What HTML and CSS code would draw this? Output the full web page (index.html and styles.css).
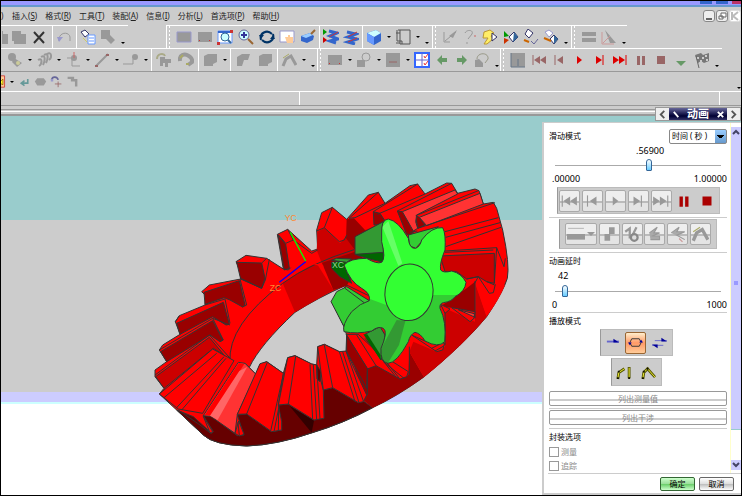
FILE: index.html
```
<!DOCTYPE html>
<html lang="zh-CN">
<head>
    <meta charset="UTF-8">
    <meta name="viewport" content="width=device-width, initial-scale=1.0">
    <link rel="stylesheet" href="styles.css">
    <title>动画</title>
</head>
<body>
    <!-- icons -->
    <svg class="sprite" aria-hidden="true">
        <symbol id="paste" viewBox="0 0 16 16"><path d="M1 2h9v3h5v10H3v-3H1z" fill="#999"/></symbol>
        <symbol id="cut" viewBox="0 0 16 16"><path d="M3 3l10 11M13 3L3 14" stroke="#333" stroke-width="2"/></symbol>
        <symbol id="undo" viewBox="0 0 16 16"><path d="M3 12C2 3 13 2 14 8v4" fill="none" stroke="#999"/><path d="M1 8l6 0-4 5z" fill="#99c"/></symbol>
        <symbol id="props" viewBox="0 0 16 16"><path d="M1 3l4-2 4 4-4 3z" fill="#fff" stroke="#336"/><path d="M8 6h7v9H8z" fill="#fff" stroke="#69f"/><path d="M9 9h5M9 12h5" stroke="#69f"/><path d="M3 9l4 4" stroke="#cc6"/></symbol>
        <symbol id="blocks" viewBox="0 0 16 16"><path d="M1 1h9v5l5 5-4 4-5-5H1z" fill="#999"/></symbol>
        <symbol id="square" viewBox="0 0 16 16"><path d="M1 3h14v10H1z" fill="#999" stroke="#99c"/></symbol>
        <symbol id="square2" viewBox="0 0 16 16"><path d="M1 3h14v10H1z" fill="#999"/><path d="M2 11h1v1H2zM12 11h1v1h-1z" fill="#c33"/></symbol>
        <symbol id="fit" viewBox="0 0 16 16"><path d="M1 2h14v12H1z" fill="#fff" stroke="#69f"/><path d="M1 3h14" stroke="#36c" stroke-width="2"/><circle cx="8" cy="8" r="4" fill="#cff" stroke="#369"/><path d="M11 11l3 3" stroke="#369" stroke-width="2"/><path d="M0 13h3v3H0zM13 1h3v3h-3z" fill="#c33"/></symbol>
        <symbol id="zoom" viewBox="0 0 16 16"><circle cx="6" cy="6" r="5" fill="#cff" stroke="#669"/><path d="M3 6h6M6 3v6" stroke="#339" stroke-width="2"/><path d="M10 10l5 5" stroke="#963" stroke-width="2"/></symbol>
        <symbol id="rotate" viewBox="0 0 16 16"><path d="M2 11C0 4 8 0 13 5M14 5C16 12 8 16 3 11" fill="none" stroke="#036" stroke-width="2"/><path d="M0 6l5 0-3 4zM11 10l5 0-2-4z" fill="#036"/></symbol>
        <symbol id="hand" viewBox="0 0 16 16"><path d="M1 2h14v11H1z" fill="#fff" stroke="#99c"/><path d="M6 8h3V6h2v2h3v6H8z" fill="#fc9"/></symbol>
        <symbol id="cylinder" viewBox="0 0 16 16"><path d="M1 7l9-3 4 3-1 4-6 3-6-2z" fill="#36c"/><path d="M1 7l9-3 3 2-7 3z" fill="#9cf"/><path d="M11 5l4-4" stroke="#963" stroke-width="2"/></symbol>
        <symbol id="spring" viewBox="0 0 16 16"><path d="M4 3l9 2-8 3 9 2-9 3 7 2" fill="none" stroke="#36c" stroke-width="3"/><path d="M5 8l9-5M5 13l9-4" stroke="#c33"/></symbol>
        <symbol id="spring2" viewBox="0 0 16 16"><path d="M6 2l8 2-7 3 8 3-8 2 6 2" fill="none" stroke="#36c" stroke-width="3"/><path d="M6 8l9-5" stroke="#c33"/><path d="M0 0l4 3-4 3z" fill="#090"/><path d="M0 8l4 3-4 3z" fill="#c00"/></symbol>
        <symbol id="cube" viewBox="0 0 16 16"><path d="M1 4l9-3 5 3v8l-7 4-7-4z" fill="#36c"/><path d="M1 4l9-3 5 3-7 4z" fill="#cff"/><path d="M1 4l7 4v8l-7-4z" fill="#69f"/></symbol>
        <symbol id="sheet" viewBox="0 0 16 16"><path d="M3 1h12v14H5V1M1 4h4M1 14h4M2 1v11h5v3" fill="none" stroke="#555"/></symbol>
        <symbol id="sketch" viewBox="0 0 16 16"><path d="M2 3v10h6M3 12l11-9" fill="none" stroke="#999"/><path d="M7 7l8-6-4 8z" fill="#999"/></symbol>
        <symbol id="query" viewBox="0 0 16 16"><path d="M3 4c2-4 9-3 7 1l-4 5M5 13v2" fill="none" stroke="#999"/><path d="M12 7h2" stroke="#c66"/></symbol>
        <symbol id="palette" viewBox="0 0 16 16"><path d="M2 3l6-2 4 3-3 3 2 3-6 5H2l4-6H1z" fill="#fe6" stroke="#b93"/><path d="M10 4l5 4-5 4z" fill="#fff" stroke="#336"/></symbol>
        <symbol id="compare" viewBox="0 0 16 16"><path d="M1 2l5 5-5 1z" fill="#090"/><path d="M1 9l5 2-5 4z" fill="#c30"/><path d="M11 3l4 5-5 5-4-5z" fill="#fff" stroke="#336"/><path d="M11 3l4 5-5 5z" fill="#369"/></symbol>
        <symbol id="measure" viewBox="0 0 16 16"><path d="M5 0l5 4-4 5-4-4z" fill="#fff" stroke="#336"/><path d="M1 11l5 2" stroke="#c60" stroke-width="2"/><path d="M8 12l3 3 4-5" fill="none" stroke="#669"/></symbol>
        <symbol id="trace" viewBox="0 0 16 16"><path d="M2 3l4-2 4 3-4 4z" fill="#fff" stroke="#99c"/><path d="M11 6l4 4-4 5-4-5z" fill="#fff" stroke="#336"/><path d="M11 6l4 4-4 5z" fill="#369"/><path d="M1 9l7 3" stroke="#c60" stroke-width="2"/></symbol>
        <symbol id="lines" viewBox="0 0 16 16"><path d="M1 5h14M1 11h14" stroke="#999" stroke-width="4"/></symbol>
        <symbol id="ruler" viewBox="0 0 16 16"><path d="M4 1l11 13H9z" fill="#999"/><path d="M1 3v12h12M2 14L9 7" fill="none" stroke="#c99"/></symbol>
        <symbol id="parts" viewBox="0 0 16 16"><circle cx="5" cy="5" r="4" fill="#999"/><path d="M7 6l8 5-5 4-5-5z" fill="#999"/><circle cx="11" cy="11" r="2" fill="#cc9"/></symbol>
        <symbol id="coil" viewBox="0 0 16 16"><path d="M2 8c5-3 4 4 1 6M5 5c5-3 4 4 2 8M8 3c5-3 4 4 2 8M11 2c5-3 5 4 2 6" fill="none" stroke="#999" stroke-width="2"/></symbol>
        <symbol id="joint" viewBox="0 0 16 16"><path d="M2 6h5v8h8" fill="none" stroke="#999"/><circle cx="9" cy="6" r="3" fill="#999"/><path d="M9 0v6" stroke="#c66"/></symbol>
        <symbol id="link" viewBox="0 0 16 16"><path d="M2 14L14 2" stroke="#999" stroke-width="2"/><path d="M1 13h3v2H1zM12 2h3v2h-3z" fill="#966"/></symbol>
        <symbol id="pin" viewBox="0 0 16 16"><path d="M0 12h10V7" fill="none" stroke="#999"/><circle cx="12" cy="5" r="3" fill="#999"/></symbol>
        <symbol id="arch" viewBox="0 0 16 16"><path d="M1 7C1 1 8 1 9 4" fill="none" stroke="#aa8" stroke-width="2"/><path d="M4 5h5v2h6v4h-3v4h-3v-4H7v3H4z" fill="#999"/></symbol>
        <symbol id="ring" viewBox="0 0 16 16"><path d="M2 9C1 2 7 2 9 3s6 3 5 7l-4 3" fill="none" stroke="#999" stroke-width="4"/><path d="M2 6l3-3M8 12h3" stroke="#aa6" stroke-width="2"/></symbol>
        <symbol id="box" viewBox="0 0 16 16"><path d="M2 4l4-2h9v8l-4 2v2H2z" fill="#999"/></symbol>
        <symbol id="bend" viewBox="0 0 16 16"><path d="M2 5l5-3h8l-2 6H9l-2 6H2z" fill="#999"/></symbol>
        <symbol id="robot" viewBox="0 0 16 16"><path d="M2 14l3-7 5-3 5 9" fill="none" stroke="#999" stroke-width="3"/><path d="M2 6l6-4" stroke="#aa6"/></symbol>
        <symbol id="probe" viewBox="0 0 16 16"><circle cx="10" cy="5" r="4" fill="#ccc" stroke="#999"/><path d="M1 8h8v7H1z" fill="#999"/></symbol>
        <symbol id="graph" viewBox="0 0 16 16"><path d="M1 1h14v14H1z" fill="#999"/><path d="M4 10h8" stroke="#966"/></symbol>
        <symbol id="check" viewBox="0 0 16 16"><path d="M1 1h14v14H1z" fill="#fff" stroke="#36f" stroke-width="2"/><path d="M8 1v14M1 8h14" stroke="#66c"/><path d="M10 4l1 2 3-4M10 11l1 2 3-4" fill="none" stroke="#e33"/></symbol>
        <symbol id="left" viewBox="0 0 16 16"><path d="M3 8l5-5v3h5v4H8v3z" fill="#696"/></symbol>
        <symbol id="right" viewBox="0 0 16 16"><path d="M13 8L8 3v3H3v4h5v3z" fill="#696"/></symbol>
        <symbol id="spin" viewBox="0 0 16 16"><path d="M3 7c0-7 12-7 11 0l-3 4" fill="none" stroke="#998"/><path d="M1 8l4-1 4 4v4H1z" fill="#999"/></symbol>
        <symbol id="panel" viewBox="0 0 16 16"><path d="M1 1h14v14H1z" fill="#999"/><path d="M1 1v14h14M8 7v7" fill="none" stroke="#678"/></symbol>
        <symbol id="first" viewBox="0 0 16 16"><path d="M2 3v10" stroke="currentColor"/><path d="M9 4v8L3 8zM15 4v8L9 8z" fill="currentColor"/></symbol>
        <symbol id="prev" viewBox="0 0 16 16"><path d="M4 3v10" stroke="currentColor"/><path d="M12 4v8L6 8z" fill="currentColor"/></symbol>
        <symbol id="play" viewBox="0 0 16 16"><path d="M6 4v8l5-4z" fill="currentColor"/></symbol>
        <symbol id="next" viewBox="0 0 16 16"><path d="M4 4v8l6-4z" fill="currentColor"/><path d="M11 3v10" stroke="currentColor"/></symbol>
        <symbol id="last" viewBox="0 0 16 16"><path d="M1 4v8l6-4zM7 4v8l6-4z" fill="currentColor"/><path d="M14 3v10" stroke="currentColor"/></symbol>
        <symbol id="pause" viewBox="0 0 16 16"><path d="M4 4h3v9H4zM9 4h3v9H9z" fill="currentColor"/></symbol>
        <symbol id="stop" viewBox="0 0 16 16"><path d="M4 4h8v8H4z" fill="currentColor"/></symbol>
        <symbol id="down" viewBox="0 0 16 16"><path d="M3 9h10l-5 5z" fill="#696"/></symbol>
        <symbol id="flag" viewBox="0 0 16 16"><path d="M1 3l6-2 2 2 6-2v8l-5 2-3-2-3 2z" fill="#777"/><path d="M3 5h2v2H3zM8 5h2v2H8zM11 3h2v2h-2zM6 8h2v2H6zM12 7h2v2h-2z" fill="#ccc"/><path d="M2 4l3 12" stroke="#666"/></symbol>
        <symbol id="sun" viewBox="0 0 16 16"><path d="M0 1h13v14H0z" fill="#fc9" stroke="#c33"/><path d="M2 8l4-4 3 3 2-2v7l-4-2-3 3z" fill="#ff3" stroke="#960"/></symbol>
        <symbol id="back" viewBox="0 0 16 16"><path d="M5 10h7V5M8 7l-4 3 4 3" fill="none" stroke="#699" stroke-width="2"/></symbol>
        <symbol id="blob" viewBox="0 0 16 16"><path d="M4 4h8l3 4-3 5H4L1 8z" fill="#999"/></symbol>
        <symbol id="arc" viewBox="0 0 16 16"><path d="M2 6c1-5 7-4 8 0" fill="none" stroke="#669" stroke-width="2"/><path d="M10 8v7M6 11h8" stroke="#966"/><path d="M1 5h3v3H1z" fill="#99c"/></symbol>
        <symbol id="corner" viewBox="0 0 16 16"><path d="M2 2h8v3h4v9h-3V8H6V5H2z" fill="#999"/></symbol>
        <symbol id="once" viewBox="0 0 16 16"><path d="M2 7h13" stroke="#66c" stroke-width="2"/><path d="M9 4l6 4H9z" fill="#009"/></symbol>
        <symbol id="loop" viewBox="0 0 16 16"><path d="M4 4h8l2 4-2 4H4L2 8z" fill="none" stroke="#333"/><path d="M0 8h4l-2 3zM12 8h4l-2-3z" fill="#009"/></symbol>
        <symbol id="swap" viewBox="0 0 16 16"><path d="M3 6h13M0 11h12" stroke="#66c"/><path d="M10 3l6 4h-6zM6 14l-6-4h6z" fill="#009"/></symbol>
        <symbol id="arm1" viewBox="0 0 16 16"><path d="M2 15l1-7 6-4M14 2v12" fill="none" stroke="#550" stroke-width="3"/><path d="M2 14l1-6 6-4M14 3v10" fill="none" stroke="#ee3"/><path d="M1 13h2v2H1zM13 13h2v2h-2zM2 6h2v2H2z" fill="#110"/></symbol>
        <symbol id="arm2" viewBox="0 0 16 16"><path d="M2 15l1-7 4-4 8 9" fill="none" stroke="#550" stroke-width="3"/><path d="M2 14l1-6 4-4 8 9" fill="none" stroke="#ee3"/><path d="M1 13h2v2H1zM2 6h2v2H2zM6 3h2v2H6z" fill="#110"/></symbol>
        <symbol id="steps" viewBox="0 0 16 16"><path d="M8 2h5v6H9v6H4V8h4z" fill="#999"/></symbol>
        <symbol id="wheel" viewBox="0 0 16 16"><path d="M2 6l4-3v9M8 10l4-8" fill="none" stroke="#999" stroke-width="2"/><circle cx="10" cy="11" r="3" fill="#ddd" stroke="#888" stroke-width="2"/></symbol>
        <symbol id="clamp" viewBox="0 0 16 16"><path d="M3 7l7-5-3 5h5l-7 3h7v3H4" fill="#aaa" stroke="#999"/></symbol>
        <symbol id="clamp2" viewBox="0 0 16 16"><path d="M2 7l7-5-2 4h7l-7 3 7 4" fill="#aaa" stroke="#999"/><path d="M9 12l3 3" stroke="#c99"/></symbol>
        <symbol id="ruler2" viewBox="0 0 16 16"><path d="M1 3h14" stroke="#bbb"/><path d="M0 8h16v5H0z" fill="#999"/></symbol>
    </svg>

    <div class="title-strip"><i></i><i></i><i class="red"></i></div>

    <nav class="menu">
        <a href="#" class="cut-off">)</a>
        <a href="#">插入(<u>S</u>)</a>
        <a href="#">格式(<u>R</u>)</a>
        <a href="#">工具(<u>T</u>)</a>
        <a href="#">装配(<u>A</u>)</a>
        <a href="#">信息(<u>I</u>)</a>
        <a href="#">分析(<u>L</u>)</a>
        <a href="#">首选项(<u>P</u>)</a>
        <a href="#">帮助(<u>H</u>)</a>
        <div class="mdi">
            <button aria-label="最小化"><svg viewBox="0 0 10 10"><path d="M2 8h6" stroke="#666" stroke-width="2"/></svg></button>
            <button aria-label="还原"><svg viewBox="0 0 10 10"><path d="M4 2h5v4H4zM2 5h4v3H2z" fill="#fff" stroke="#666"/></svg></button>
            <button aria-label="关闭" disabled><svg viewBox="0 0 10 10"><path d="M2 1v8M8 1L3 5l5 4" fill="none" stroke="#bbb" stroke-width="2"/></svg></button>
        </div>
    </nav>

    <div class="toolrow">
        <div class="bar bar-edit">
            <div class="group">
                <button class="tool half"><svg><use href="#paste"/></svg></button>
                <button class="tool"><svg><use href="#paste"/></svg></button>
                <button class="tool"><svg><use href="#cut"/></svg></button>
            </div>
            <div class="group"><button class="tool"><svg><use href="#undo"/></svg></button></div>
            <div class="group">
                <button class="tool"><svg><use href="#props"/></svg></button>
                <button class="tool"><svg><use href="#blocks"/></svg></button>
                <button class="caret low"></button>
            </div>
        </div>
        <div class="bar grip bar-view">
            <div class="group grow">
                <button class="tool"><svg><use href="#square"/></svg></button>
                <button class="tool"><svg><use href="#square2"/></svg></button>
                <button class="tool"><svg><use href="#fit"/></svg></button>
                <button class="tool"><svg><use href="#zoom"/></svg></button>
                <button class="tool"><svg><use href="#rotate"/></svg></button>
                <button class="tool"><svg><use href="#hand"/></svg></button>
                <button class="tool"><svg><use href="#cylinder"/></svg></button>
            </div>
            <div class="group">
                <button class="tool"><svg><use href="#spring2"/></svg></button>
                <button class="tool"><svg><use href="#spring"/></svg></button>
            </div>
            <div class="group">
                <button class="tool"><svg><use href="#cube"/></svg></button><button class="caret"></button>
                <button class="tool"><svg><use href="#sheet"/></svg></button><button class="caret"></button>
                <button class="caret low"></button>
            </div>
        </div>
        <div class="bar grip bar-check">
            <div class="group grow">
                <button class="tool"><svg><use href="#sketch"/></svg></button>
                <button class="tool"><svg><use href="#query"/></svg></button>
                <button class="tool"><svg><use href="#palette"/></svg></button>
                <button class="tool"><svg><use href="#compare"/></svg></button>
                <button class="tool"><svg><use href="#measure"/></svg></button>
                <button class="tool"><svg><use href="#trace"/></svg></button>
                <button class="caret low"></button>
            </div>
        </div>
        <div class="bar grip bar-ruler">
            <div class="group grow">
                <button class="tool"><svg><use href="#lines"/></svg></button>
                <button class="tool"><svg><use href="#ruler"/></svg></button>
                <button class="caret low"></button>
            </div>
        </div>
    </div>

    <div class="toolrow">
        <div class="bar bar-motion">
            <div class="group first">
                <button class="tool"><svg><use href="#parts"/></svg></button><button class="caret"></button>
                <button class="tool"><svg><use href="#coil"/></svg></button><button class="caret"></button>
                <button class="tool"><svg><use href="#joint"/></svg></button><button class="caret"></button>
                <button class="tool"><svg><use href="#link"/></svg></button><button class="caret"></button>
                <button class="tool"><svg><use href="#pin"/></svg></button><button class="caret"></button>
            </div>
            <div class="group pair">
                <button class="tool"><svg><use href="#arch"/></svg></button>
                <button class="tool"><svg><use href="#ring"/></svg></button>
            </div>
            <div class="group"><button class="tool"><svg><use href="#box"/></svg></button><button class="caret"></button></div>
            <div class="group pair">
                <button class="tool"><svg><use href="#bend"/></svg></button>
                <button class="tool"><svg><use href="#box"/></svg></button>
            </div>
            <div class="group"><button class="tool"><svg><use href="#robot"/></svg></button><button class="caret"></button><button class="caret low"></button></div>
        </div>
        <div class="bar grip bar-solve">
            <div class="group grow">
                <button class="tool"><svg><use href="#square2"/></svg></button><button class="caret"></button>
                <button class="tool"><svg><use href="#probe"/></svg></button><button class="caret"></button>
                <button class="tool"><svg><use href="#graph"/></svg></button><button class="caret"></button>
                <button class="tool"><svg><use href="#check"/></svg></button>
                <button class="tool"><svg><use href="#left"/></svg></button>
                <button class="tool"><svg><use href="#right"/></svg></button>
                <button class="tool"><svg><use href="#spin"/></svg></button>
                <button class="caret low"></button>
            </div>
        </div>
        <div class="bar grip bar-anim">
            <div class="group grow">
                <button class="tool"><svg><use href="#panel"/></svg></button>
                <button class="tool dull"><svg><use href="#first"/></svg></button>
                <button class="tool dull"><svg><use href="#prev"/></svg></button>
                <button class="tool live"><svg><use href="#play"/></svg></button>
                <button class="tool live"><svg><use href="#next"/></svg></button>
                <button class="tool live"><svg><use href="#last"/></svg></button>
                <button class="tool dull"><svg><use href="#pause"/></svg></button>
                <button class="tool dull"><svg><use href="#stop"/></svg></button>
                <button class="tool"><svg><use href="#down"/></svg></button>
                <button class="tool"><svg><use href="#flag"/></svg></button>
                <button class="caret low"></button>
            </div>
        </div>
    </div>

    <div class="toolrow small">
        <button class="tool half"><svg><use href="#sun"/></svg></button><button class="caret"></button>
        <button class="tool"><svg><use href="#back"/></svg></button>
        <button class="tool"><svg><use href="#blob"/></svg></button>
        <button class="tool"><svg><use href="#arc"/></svg></button>
        <button class="tool"><svg><use href="#corner"/></svg></button>
        <button class="caret low end"></button>
    </div>
    <div class="prompt"><div></div><div></div><div></div></div>
    <div class="edge"></div>

    <main class="work">
        <!-- bevel gear and pinion, drawn at three units to the pixel -->
        <svg class="model" viewBox="0 0 1110 825" role="img" aria-label="锥齿轮">
            <defs>
                <clipPath id="pinion-face">
                    <path d="M695 180Q692 133 715 132Q745 138 775 190Q778 222 797 220Q810 215 815 195Q845 155 878 158Q888 175 885 225Q868 265 872 285Q880 295 905 288Q935 295 948 322Q945 350 915 365Q905 380 880 383Q868 385 870 400Q890 440 884 500Q865 520 825 498Q812 475 795 472Q780 478 775 500Q740 565 713 565Q690 560 693 520Q715 470 700 460Q685 452 665 468Q620 478 582 470Q575 450 605 410Q630 385 658 377Q662 355 635 340Q600 320 582 270Q600 250 650 250Q680 268 695 262Q708 250 695 200z"/>
                </clipPath>
            </defs>
            <g class="ink">
                <path fill="#f00" fill-rule="evenodd" d="M28 657L42 640 15 605 15 585 50 560 28 525 38 510 90 478 76 440 88 422 165 390 168 363 155 350 178 330 272 312 270 285 258 260 288 241 350 250 400 282 382 178 413 163 485 228 503 222 500 165 515 113 547 97 590 133 655 60 685 52 705 85 780 32 803 27 825 57 890 24 905 25 923 55 975 42 987 47 1000 87 1030 82 1040 100 1058 165Q1080 270 1072 310Q1060 350 1010 425Q940 510 820 607Q740 665 668 698Q580 745 487 773Q380 810 290 813Q190 810 160 780L80 705z
                M298 577Q330 510 435 412Q500 370 590 330L545 380 582 455 590 480 588 530 568 530 523 508 503 515 500 570 485 567 435 542 413 548 400 595 350 560 330 568 318 598 285 565z"/>
                <!-- inner cone -->
                <g stroke="none">
                    <path fill="#c00" d="M398 325Q450 285 500 265L550 345 435 412z"/>
                    <path fill="#900" d="M515 262L615 228 640 250 590 332 550 345z"/>
                    <path fill="#c00" d="M500 225L503 170 523 158 570 205 590 182 600 140 615 230 515 264z"/>
                    <path fill="#900" d="M590 133L612 130 645 165 660 170 615 190 615 225 588 190z"/>
                    <path fill="#c00" d="M645 165L690 147 705 138 690 150 660 172z"/>
                </g>
                <path fill="none" d="M240 562Q232 450 398 325Q480 265 612 224"/>
                <!-- back teeth -->
                <path fill="#900" d="M80 445L220 382 238 448 228 450 188 425 90 478z"/>
                <path fill="#900" d="M162 352L268 317 285 390 278 396 240 375 222 368 165 388z"/>
                <path fill="#900" d="M260 262L335 264 345 310 335 340 272 312z"/>
                <path fill="#900" d="M384 180L407 208 418 280 403 285z"/>
                <path fill="#900" d="M32 530L188 437 218 495 210 500 180 480 50 560z"/>
                <path fill="#c00" d="M17 605L178 487 222 540 190 520 42 640z"/>
                <path fill="none" d="M76 440L88 422M165 390L225 372 240 445M270 312L290 390 278 396M272 310L335 340 346 315 358 253M335 264L350 250M400 282L415 285 422 278M384 178L407 205 430 195 413 163M430 195L485 235 503 225M500 168L523 158 547 97M523 158L568 200 583 195 590 180M28 525L188 430 240 450M188 430L220 495 210 500M178 480L245 555M15 600L178 480"/>
                <!-- rim shading -->
                <path fill="#600" d="M80 705L130 725 185 775 190 770 160 722 182 722 262 782 282 780 262 720 290 717 365 770 395 765 385 690 415 687 492 735 520 728 520 645 548 638 625 683 640 678 668 698Q580 745 487 773Q380 810 290 813Q190 810 160 780z"/>
                <g stroke="none">
                    <path fill="#300" d="M418 692L492 737 485 773z"/>
                    <path fill="#900" d="M588 478L652 580 678 572 752 612 775 600 778 530 822 607Q740 665 668 698L640 675z"/>
                    <path fill="#c00" d="M778 530L790 500 860 530 885 515 885 400 975 440 977 330 1010 425Q940 510 822 607z"/>
                    <path fill="#f00" d="M977 325L985 305 1020 352 1065 330Q1050 370 1010 425z"/>
                    <path fill="#900" d="M870 395L950 340 975 320 975 410 905 398z"/>
                </g>
                <path fill="none" d="M652 580V660M778 515V600M885 400V510M975 318V430"/>
                <!-- front teeth -->
                <path d="M28 657L188 522 252 557 158 715 85 702z"/>
                <path fill="none" d="M42 668L200 535M78 700L222 545M95 705L228 550M85 705L150 750 182 775"/>
                <path fill="#f33" d="M160 722L265 562 285 565 318 598 262 718 255 775 182 724z"/>
                <path stroke="none" d="M164 720L266 564 283 567 182 722z"/>
                <path fill="#f66" stroke="none" d="M180 722L268 588 292 575 203 735z"/>
                <path d="M255 775L266 738 282 778 268 783zM160 724L188 770 180 774z"/>
                <path d="M262 718L330 566 350 560 400 595 385 690 395 740 395 765 365 770 290 717z"/>
                <path fill="none" d="M290 717L352 562M362 768L400 598M372 770L388 690M385 768L386 700M268 782l-4-40"/>
                <path d="M385 690L413 548 435 542 485 567 500 570 520 645 522 730 492 735 415 687z"/>
                <path fill="#600" d="M500 570L513 590 510 620 501 612z"/>
                <path fill="none" d="M415 687L437 544M480 568L488 733M490 570L500 735M500 570L510 733"/>
                <path d="M503 515L523 508 568 530 588 528 650 660 640 680 625 683 548 638 520 645z"/>
                <path fill="none" d="M548 638L523 510M568 530L615 680M578 530L627 683M588 528L640 678"/>
                <path d="M588 478L625 478 680 530 775 590 770 605 750 612 678 572 652 582z"/>
                <path fill="#900" d="M590 480L652 580 650 640 590 530z"/>
                <path fill="none" d="M620 480L678 572M645 490L735 602M660 500L748 610M700 560L762 610"/>
                <path d="M785 480L825 498 884 505 878 525 860 530z"/>
                <path fill="none" d="M845 520l35-18M855 528l28-16"/>
                <!-- right hand teeth -->
                <path fill="#900" d="M670 110L690 115 705 138 690 148 672 150zM742 108L757 110 795 165 785 178 770 178zM797 122L808 127 825 150 803 160z"/>
                <path fill="#f33" d="M757 110L915 45 923 57 800 120 797 140 803 160 790 168z"/>
                <path fill="#f33" d="M808 127L990 55 1000 87 830 152z"/>
                <path fill="none" d="M597 130L615 128 705 85M597 130L685 52M670 110L803 27M682 118L825 57M742 108L905 25M797 122L985 47M803 160L1035 83M885 170L1045 128M887 187L1050 143M887 215L1053 157M885 228L1040 218 1062 275 1066 250M780 172l22-4"/>
                <path fill="#c00" d="M870 243L1033 235 1033 325 1010 320 985 305 950 312 920 290 885 290z"/>
                <path fill="none" d="M885 232L1030 225M1040 218L1033 325M985 305L1018 355 1030 353 1036 328M1010 320l24 10M950 312L985 305 974 325"/>
                <path d="M872 388L900 402 885 415zM905 398L960 440 972 430 975 410z"/>
                <path fill="#f33" d="M925 404L973 416V426z"/>
            </g>
            <g class="ink">
                <path fill="#393" d="M615 185L700 140 700 245 615 238z"/>
                <path fill="#060" d="M615 238L700 232 700 262 650 250z"/>
                <path fill="#060" d="M545 262L600 255 585 275 605 325 570 305 545 280z"/>
                <path fill="#393" d="M545 256L560 250 605 252 590 262z"/>
                <path fill="#3c3" d="M775 180L865 155 815 200 797 220 778 212z"/>
                <path fill="#3c3" d="M543 380L560 350 590 335 658 377 630 395 582 455z"/>
                <path fill="none" d="M585 340L645 385M590 330L656 362"/>
                <path fill="#393" d="M645 478L690 455 705 480 693 555z"/>
                <path fill="#060" stroke="none" d="M640 478L652 478 692 540V556z"/>
            </g>
            <g clip-path="url(#pinion-face)">
                <path fill="#3f3" d="M560 120h400v460H560z"/>
                <path fill="#3c3" d="M560 490L600 410 660 372 735 400 760 437 850 360H960V600H560z"/>
                <path fill="#393" d="M740 435L766 438 747 510 710 570 690 560 694 520z"/>
                <path fill="#6f6" d="M697 155L715 138 757 265 745 272z"/>
            </g>
            <g class="ink">
                <path d="M695 180Q692 133 715 132Q745 138 775 190Q778 222 797 220Q810 215 815 195Q845 155 878 158Q888 175 885 225Q868 265 872 285Q880 295 905 288Q935 295 948 322Q945 350 915 365Q905 380 880 383Q868 385 870 400Q890 440 884 500Q865 520 825 498Q812 475 795 472Q780 478 775 500Q740 565 713 565Q690 560 693 520Q715 470 700 460Q685 452 665 468Q620 478 582 470Q575 450 605 410Q630 385 658 377Q662 355 635 340Q600 320 582 270Q600 250 650 250Q680 268 695 262Q708 250 695 200z" fill="none"/>
                <ellipse cx="777" cy="352" rx="72" ry="85" transform="rotate(8 777 352)" fill="#3f3"/>
            </g>
            <g stroke-width="4">
                <path d="M421 172L467 258" stroke="#0f0"/>
                <path d="M467 260L388 322" stroke="#00f"/>
                <path d="M470 260L520 274" stroke="#f00"/>
            </g>
            <g class="axis">
                <text x="404" y="137">YC</text>
                <text x="359" y="348">ZC</text>
                <text x="546" y="280" class="x">XC</text>
            </g>
        </svg>

        <form class="float">
            <header class="caption">
                <button type="button" class="end" aria-label="上一个"><svg viewBox="0 0 10 10"><path d="M7 1L3 5l4 4" fill="none" stroke="#555" stroke-width="2"/></svg></button>
                <button type="button" aria-label="固定"><svg viewBox="0 0 10 10"><path d="M2 2l5 6" stroke="#fff" stroke-width="2"/></svg></button>
                <h1>动画</h1>
                <button type="button" aria-label="关闭"><svg viewBox="0 0 10 10"><path d="M2 2l6 6M8 2L2 8" stroke="#fff" stroke-width="2"/></svg></button>
                <button type="button" class="end" aria-label="下一个"><svg viewBox="0 0 10 10"><path d="M3 1l4 4-4 4" fill="none" stroke="#555" stroke-width="2"/></svg></button>
            </header>
            <div class="dialog">
                <div class="scrolled">
                    <div class="content">
                        <div class="row">
                            <label for="mode">滑动模式</label>
                            <select id="mode"><option>时间 ( 秒 )</option></select>
                        </div>
                        <output class="value time">.56900</output>
                        <input type="range" min="0" max="1" step="0.001" value="0.569" aria-label="时间">
                        <div class="limits"><span>.00000</span><span>1.00000</span></div>
                        <div class="panel playback">
                            <button type="button" class="key" aria-label="第一步" disabled><svg><use href="#first"/></svg></button>
                            <button type="button" class="key" aria-label="上一步" disabled><svg><use href="#prev"/></svg></button>
                            <button type="button" class="key" aria-label="播放" disabled><svg><use href="#play"/></svg></button>
                            <button type="button" class="key" aria-label="下一步" disabled><svg><use href="#next"/></svg></button>
                            <button type="button" class="key" aria-label="最后一步" disabled><svg><use href="#last"/></svg></button>
                            <button type="button" class="key on" aria-label="暂停"><svg><use href="#pause"/></svg></button>
                            <button type="button" class="key on" aria-label="停止"><svg><use href="#stop"/></svg></button>
                        </div>
                        <hr>
                        <div class="panel extras">
                            <button type="button" class="key wide" aria-label="封装" disabled><svg><use href="#ruler2"/></svg><i></i></button>
                            <button type="button" class="key" aria-label="步进" disabled><svg><use href="#steps"/></svg></button>
                            <button type="button" class="key" aria-label="齿轮" disabled><svg><use href="#wheel"/></svg></button>
                            <button type="button" class="key" aria-label="夹紧" disabled><svg><use href="#clamp"/></svg></button>
                            <button type="button" class="key" aria-label="松开" disabled><svg><use href="#clamp2"/></svg></button>
                            <button type="button" class="key" aria-label="机构" disabled><svg><use href="#robot"/></svg></button>
                        </div>
                        <hr>
                        <label class="heading" for="delay">动画延时</label>
                        <output class="value delay">42</output>
                        <input type="range" id="delay" min="0" max="1000" value="42">
                        <div class="limits"><span>0</span><span>1000</span></div>
                        <hr>
                        <div class="heading">播放模式</div>
                        <div class="panel modes">
                            <button type="button" class="key flat" aria-label="播放一次"><svg><use href="#once"/></svg></button>
                            <button type="button" class="key flat chosen" aria-label="循环播放"><svg><use href="#loop"/></svg></button>
                            <button type="button" class="key flat" aria-label="往返播放"><svg><use href="#swap"/></svg></button>
                        </div>
                        <div class="panel arms">
                            <button type="button" class="key flat" aria-label="设计位置"><svg><use href="#arm1"/></svg></button>
                            <button type="button" class="key flat" aria-label="装配位置"><svg><use href="#arm2"/></svg></button>
                        </div>
                        <button type="button" class="long" disabled>列出测量值</button>
                        <hr class="tight">
                        <button type="button" class="long" disabled>列出干涉</button>
                        <hr>
                        <div class="heading">封装选项</div>
                        <label class="tick"><input type="checkbox" disabled>测量</label>
                        <label class="tick"><input type="checkbox" disabled>追踪</label>
                    </div>
                    <div class="scroll">
                        <svg viewBox="0 0 10 10"><path d="M2 7l3-3 3 3" fill="none" stroke="#446" stroke-width="2"/></svg>
                        <div class="thumb"></div>
                        <svg viewBox="0 0 10 10"><path d="M2 3l3 3 3-3" fill="none" stroke="#446" stroke-width="2"/></svg>
                    </div>
                </div>
                <footer>
                    <button type="button" class="ok">确定</button>
                    <button type="button">取消</button>
                </footer>
            </div>
        </form>
    </main>
</body>
</html>
```
FILE: styles.css
```
* {
    box-sizing: border-box;
}

body {
    margin: 0;
    min-height: 100vh;
    display: flex;
    flex-direction: column;
    overflow: hidden;
    border: 1px solid #000;
    background: #ccc;
    color: #000;
    font: 8px/10px "Noto Sans", "Noto Sans CJK SC", sans-serif;
}

button, select, input {
    margin: 0;
    padding: 0;
    border: 0;
    font: inherit;
    color: inherit;
    background: none;
}

.sprite {
    position: absolute;
    width: 0;
    height: 0;
}

.title-strip {
    height: 6px;
    flex: none;
    display: flex;
    justify-content: flex-end;
    gap: 4px;
    background: #99f;
    border-bottom: 2px solid #69c;
}

.title-strip i {
    width: 12px;
    height: 3px;
    background: #36c;
}

.title-strip .red {
    width: 9px;
    background: #b36;
}

/* menu */
.menu {
    display: flex;
    align-items: center;
    gap: 8px;
    height: 18px;
}

.menu a {
    color: #222;
    text-decoration: none;
    white-space: nowrap;
}

.menu .cut-off {
    width: 3px;
}

.mdi {
    display: flex;
    gap: 1px;
    margin-left: auto;
}

.mdi button {
    width: 12px;
    height: 12px;
    border: 1px solid #888;
    border-radius: 3px;
    background: #eee;
    display: flex;
}

.mdi button:disabled {
    border-color: #ddd;
    background: #fff;
}

/* toolbars */
.toolrow {
    display: flex;
    height: 23px;
}

.bar {
    display: flex;
    justify-content: space-between;
    flex: none;
    border-top: 1px solid #fff;
    overflow: hidden;
}

.grip {
    border-left: 1px solid #fff;
    padding-left: 6px;
    background: radial-gradient(circle, #fff 1px, transparent 1px) 1px 3px / 3px 4px repeat-y;
}

.bar-edit { width: 127px; margin-right: 38px; }
.bar-view { width: 266px; }
.bar-check { width: 139px; }
.bar-ruler { width: 56px; }
.bar-motion { width: 316px; }
.bar-solve { width: 183px; }
.bar-anim { width: 222px; }

.group {
    display: flex;
    align-items: center;
    padding: 0 1px;
}

.group + .group {
    border-left: 1px solid #fff;
}

.grow {
    flex: 1;
}

.grow .tool {
    flex: 1;
}

.first {
    padding-left: 4px;
}

.pair .tool {
    width: 22px;
}

.tool {
    width: 20px;
    height: 20px;
    display: flex;
    align-items: center;
    justify-content: center;
}

.tool svg {
    width: 16px;
    height: 16px;
    flex: none;
}

.half {
    width: 7px;
    justify-content: flex-end;
    overflow: hidden;
}

.dull { color: #966; }
.live { color: #d00; }

.caret {
    width: 9px;
    height: 20px;
    display: flex;
    align-items: center;
    justify-content: center;
}

.caret::after {
    content: "";
    border: 2px solid transparent;
    border-top-color: #000;
    border-bottom: 0;
}

.low {
    align-items: flex-end;
    padding-bottom: 3px;
}

.small {
    height: 21px;
    align-items: center;
    border-top: 1px solid #999;
    border-bottom: 1px solid #fff;
}

.small .tool {
    width: 16px;
}

.small .half {
    width: 6px;
}

.small .tool svg {
    width: 13px;
    height: 13px;
}

.small .end {
    width: 5px;
    margin-left: auto;
}

.prompt {
    display: flex;
    height: 14px;
    border-bottom: 1px solid #999;
}

.prompt div {
    flex: 299;
    border-right: 1px solid #fff;
}

.prompt div + div {
    flex: 421;
}

.prompt div:last-child {
    flex: 21;
    border: 0;
}

.edge {
    height: 10px;
    background: linear-gradient(#ccc 3px, #999 3px 4px, #ccc 4px 5px, #fff 5px 6px, #ccc 6px 8px, #999 8px);
}

/* drawing area */
.work {
    flex: 1;
    position: relative;
    padding: 59px 0 0 149px;
    background: linear-gradient(#9cc 104px, #ccc 104px 276px, #ccf 276px 286px, #cff 286px 288px, #fff 288px);
}

.model {
    display: block;
    width: 370px;
    height: 275px;
}

.ink {
    fill: #f00;
    stroke: #333;
    stroke-width: 3;
    stroke-linejoin: round;
}

.axis {
    font: 26px "Liberation Sans", sans-serif;
    fill: #f83;
}

.axis .x {
    fill: #9c9;
}

/* animation dialog, floats over the drawing */
.float {
    position: absolute;
    top: -9px;
    right: 0;
    bottom: 0;
    width: 199px;
    display: flex;
    flex-direction: column;
}

.caption {
    align-self: flex-end;
    width: 86px;
    height: 14px;
    margin-bottom: 1px;
    display: flex;
    align-items: center;
    background: linear-gradient(#669, #003 8px, #336);
    border: 1px solid #999;
}

.caption h1 {
    flex: 1;
    margin: 0;
    font-size: 11px;
    line-height: 12px;
    color: #fff;
    text-align: center;
}

.caption button {
    width: 14px;
    height: 12px;
    display: flex;
    align-items: center;
    justify-content: center;
}

.caption svg {
    width: 9px;
    height: 9px;
}

.caption .end {
    width: 13px;
    background: #eee;
}

.dialog {
    flex: 1;
    display: flex;
    flex-direction: column;
    background: #fff;
    border: solid #ccc;
    border-width: 1px 0 2px 2px;
}

.scrolled {
    flex: 1;
    display: flex;
}

.content {
    flex: 1;
    padding: 3px 3px 0 5px;
    display: flex;
    flex-direction: column;
}

.row {
    display: flex;
    align-items: center;
    justify-content: space-between;
    height: 20px;
}

select {
    width: 58px;
    height: 15px;
    padding-left: 2px;
    border: 1px solid #888;
    border-radius: 2px;
    appearance: none;
    background: linear-gradient(#000, #000) right 2px top 5px / 7px 1px no-repeat,
        linear-gradient(#000, #000) right 3px top 6px / 5px 1px no-repeat,
        linear-gradient(#000, #000) right 4px top 7px / 3px 1px no-repeat,
        linear-gradient(#9cf, #69c) right / 11px 100% no-repeat, #fff;
}

.value, .limits {
    font-size: 9px;
}

.value {
    align-self: flex-start;
}

.time { margin-left: 87px; }
.delay { margin-left: 9px; line-height: 13px; }

.limits {
    display: flex;
    justify-content: space-between;
    padding-left: 3px;
    line-height: 9px;
}

input[type=range] {
    appearance: none;
    width: auto;
    height: 18px;
    margin: 0 6px;
    background: linear-gradient(#aaa, #aaa) center / 100% 1px no-repeat;
}

input[type=range]::-webkit-slider-thumb {
    appearance: none;
    width: 6px;
    height: 12px;
    border: 1px solid #369;
    border-radius: 3px 3px 1px 1px;
    background: linear-gradient(#fff, #6cf);
}

hr {
    width: 100%;
    height: 1px;
    margin: 3px 0 0;
    border: 0;
    background: #ccc;
}

.tight { margin: 2px 0 1px; }

.panel {
    align-self: center;
    display: flex;
    align-items: center;
    background: #ccc;
    border: 1px solid #bbb;
    border-left-color: #999;
}

.playback {
    width: 163px;
    height: 27px;
    margin-top: 4px;
    padding: 0 1px;
    justify-content: space-between;
}

.extras {
    width: 158px;
    height: 30px;
    margin-top: 1px;
    padding: 0 5px;
    justify-content: space-between;
}

.key {
    width: 21px;
    height: 22px;
    display: flex;
    align-items: center;
    justify-content: center;
    border: 1px solid #aaa;
    border-radius: 2px;
    background: linear-gradient(#eee 50%, #bbb 50% 60%, #e4e4e4 60%);
    color: #999;
}

.key svg {
    width: 18px;
    height: 18px;
    flex: none;
}

.key.on {
    border-color: transparent;
    background: none;
    color: #a00;
}

.key.wide {
    width: 32px;
}

.wide i {
    width: 8px;
    height: 4px;
    margin-left: 2px;
    background: #999;
    clip-path: polygon(0 0, 100% 0, 50% 100%);
}

.heading {
    height: 16px;
    line-height: 16px;
}

.modes {
    width: 73px;
    height: 27px;
    margin-right: 4px;
    justify-content: space-around;
}

.arms {
    width: 51px;
    height: 28px;
    margin: 2px 4px 5px 0;
    justify-content: space-around;
}

.key.flat {
    border-color: transparent;
    background: none;
}

.flat svg {
    width: 15px;
    height: 15px;
}

.key.chosen {
    border-color: #963;
    background: linear-gradient(#fec, #f96 50%, #fc9);
}

.long {
    height: 15px;
    border: 1px solid #999;
    border-radius: 2px;
    background: linear-gradient(#fff 7px, #ccc 7px 9px, #fff 9px);
    color: #888;
}

.tick {
    display: flex;
    align-items: center;
    gap: 2px;
    height: 14px;
    color: #888;
}

.tick input {
    appearance: none;
    width: 10px;
    height: 10px;
    border: 1px solid #999;
}

.scroll {
    width: 11px;
    display: flex;
    flex-direction: column;
    border-left: 1px solid #ffc;
    padding: 4px 0 3px;
}

.scroll svg {
    height: 10px;
    background: #ccf;
}

.thumb {
    flex: 1;
    margin-bottom: 30px;
    background: linear-gradient(#99f, #99f) center / 4px 4px no-repeat, #ccf;
    border-bottom: 1px solid #9cc;
}

footer {
    display: flex;
    justify-content: flex-end;
    gap: 4px;
    height: 20px;
    padding: 3px 7px 0 0;
    margin: 0 0 0 4px;
    border-top: 1px solid #ccc;
}

footer button {
    width: 35px;
    height: 14px;
    border: 1px solid #666;
    border-radius: 2px;
    background: linear-gradient(#fff, #ddd 50%, #bbb 50%, #fff);
}

footer .ok {
    border-color: #363;
    background: linear-gradient(#cfc, #9d9 50%, #6c6 50%, #cfc);
}
```
